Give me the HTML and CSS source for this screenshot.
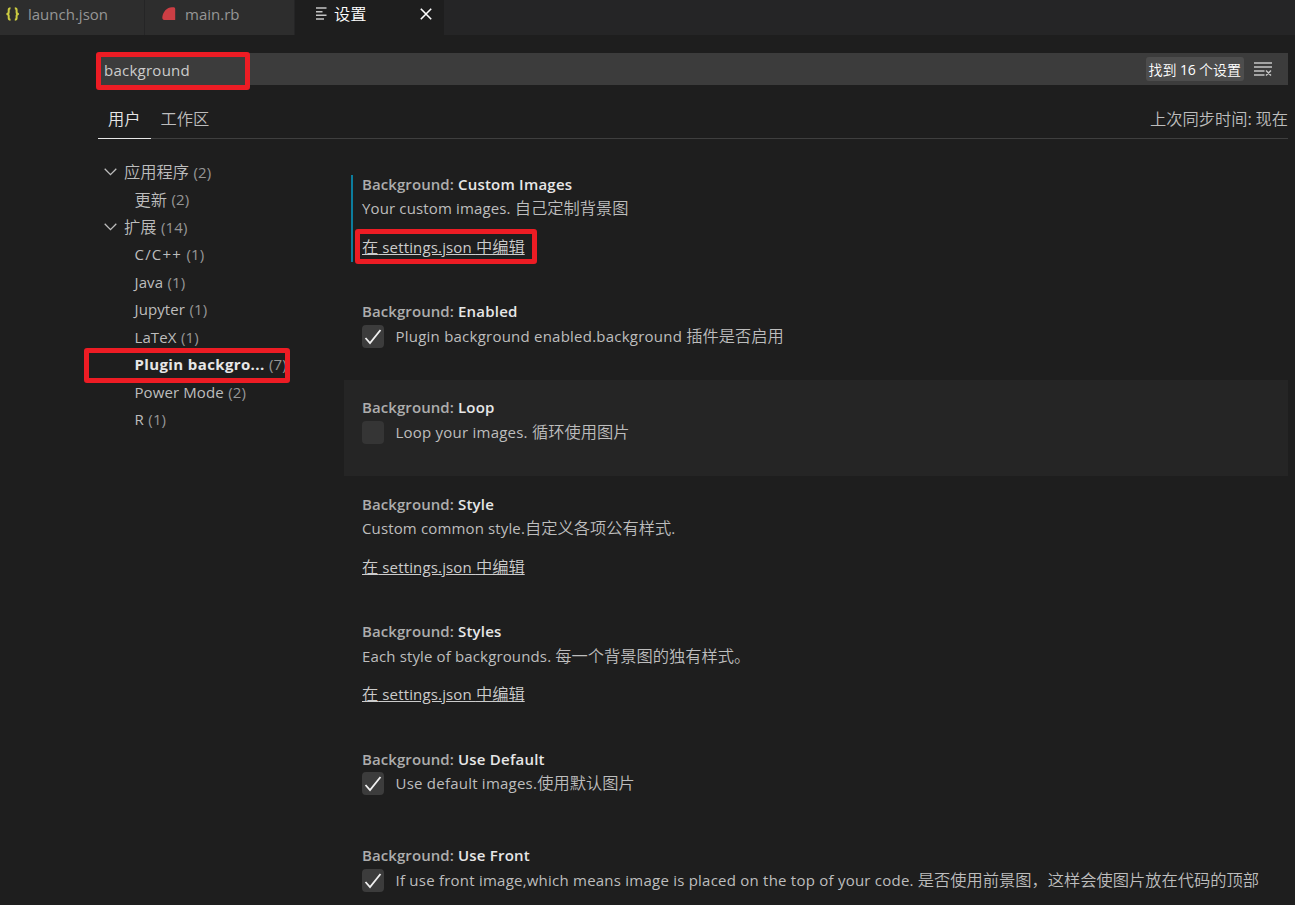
FILE: index.html
```html
<!DOCTYPE html>
<html lang="zh-CN">
<head>
  <meta charset="UTF-8">
  <title>设置</title>
  <link rel="stylesheet" href="styles.css">
</head>

<body>
  <div class="tabs">
    <div class="tab tab-json">
      <svg class="icon-json" width="14" height="14" viewBox="0 0 14 14"><path d="M4.500 1.200C3 1.200 2.700 1.800 2.700 3v2.200C2.700 6.300 2.200 6.900.5 7c1.700.1 2.200.7 2.200 1.800V11c0 1.200.3 1.800 1.800 1.800M8.800 1.200c1.500 0 1.800.6 1.800 1.800v2.200c0 1.100.5 1.700 2.200 1.800-1.700.1-2.200.7-2.200 1.800V11c0 1.200-.3 1.800-1.800 1.800"/></svg>
      <span>launch.json</span>
    </div>
    <div class="tab tab-ruby">
      <svg class="icon-ruby" width="14" height="14" viewBox="0 0 14 14"><path d="M13.200 2v11H3C.8 13.300 0 12 .4 9.500 1.200 4.500 5 .6 9.800.3c2.400-.1 3.400.2 3.400 1.700z"/></svg>
      <span>main.rb</span>
    </div>
    <div class="tab tab-settings active">
      <svg class="icon-lines" width="11" height="13" viewBox="0 0 11 13"><path d="M0 1h10.500M0 4.700h6.500M0 8.300h10.500M0 12h8"/></svg>
      <span class="zh">设置</span>
      <svg class="icon-close" width="12" height="12" viewBox="0 0 12 12"><path d="M.8.8l10.400 10.400M11.200.8L.8 11.200"/></svg>
    </div>
  </div>

  <div class="settings">
    <div class="search">
      <div class="search-text">background</div>
      <div class="count"><span class="zh">找到</span> 16 <span class="zh">个设置</span></div>
      <svg class="icon-clear" width="18" height="14" viewBox="0 0 18 14"><path d="M0 1h18M0 5h18M0 9h10.500M0 13h10.500M12 8.500l5 5M17 8.500l-5 5"/></svg>
      <div class="mark mark-search"></div>
    </div>

    <div class="scopes">
      <div class="scope selected">用户</div>
      <div class="scope">工作区</div>
      <div class="sync">上次同步时间: 现在</div>
    </div>

    <div class="columns">
      <div class="toc">
        <div class="row group"><svg class="chevron" width="13" height="8" viewBox="0 0 13 8"><path d="M.7.8l5.800 5.800L12.300.8"/></svg><span class="zh">应用程序</span><span class="num">(2)</span></div>
        <div class="row"><span class="zh">更新</span><span class="num">(2)</span></div>
        <div class="row group"><svg class="chevron" width="13" height="8" viewBox="0 0 13 8"><path d="M.7.8l5.800 5.800L12.300.8"/></svg><span class="zh">扩展</span><span class="num">(14)</span></div>
        <div class="row"><span class="cpp">C/C++</span><span class="num">(1)</span></div>
        <div class="row"><span>Java</span><span class="num">(1)</span></div>
        <div class="row"><span>Jupyter</span><span class="num">(1)</span></div>
        <div class="row"><span>LaTeX</span><span class="num">(1)</span></div>
        <div class="row current"><span class="name">Plugin backgro...</span><span class="num">(7)</span><div class="mark mark-toc"></div></div>
        <div class="row"><span>Power Mode</span><span class="num">(2)</span></div>
        <div class="row"><span>R</span><span class="num">(1)</span></div>
      </div>

      <div class="list">
        <div class="item complex modified">
          <div class="title">Background: <b>Custom Images</b></div>
          <div class="desc">Your custom images. <span class="zh">自己定制背景图</span></div>
          <a class="edit"><span class="zh">在</span> settings.json <span class="zh">中编辑</span></a>
          <div class="mark mark-edit"></div>
        </div>
        <div class="item">
          <div class="title">Background: <b>Enabled</b></div>
          <div class="check-row">
            <div class="checkbox"><svg width="18" height="18" viewBox="0 0 18 18"><path d="M1.500 10l4.500 5L16.500 2"/></svg></div>
            <div class="desc">Plugin background enabled.background <span class="zh">插件是否启用</span></div>
          </div>
        </div>
        <div class="item focused">
          <div class="title">Background: <b>Loop</b></div>
          <div class="check-row">
            <div class="checkbox"></div>
            <div class="desc">Loop your images. <span class="zh">循环使用图片</span></div>
          </div>
        </div>
        <div class="item complex">
          <div class="title">Background: <b>Style</b></div>
          <div class="desc">Custom common style.<span class="zh">自定义各项公有样式</span>.</div>
          <a class="edit"><span class="zh">在</span> settings.json <span class="zh">中编辑</span></a>
        </div>
        <div class="item complex">
          <div class="title">Background: <b>Styles</b></div>
          <div class="desc">Each style of backgrounds. <span class="zh">每一个背景图的独有样式。</span></div>
          <a class="edit"><span class="zh">在</span> settings.json <span class="zh">中编辑</span></a>
        </div>
        <div class="item">
          <div class="title">Background: <b>Use Default</b></div>
          <div class="check-row">
            <div class="checkbox"><svg width="18" height="18" viewBox="0 0 18 18"><path d="M1.500 10l4.500 5L16.500 2"/></svg></div>
            <div class="desc">Use default images.<span class="zh">使用默认图片</span></div>
          </div>
        </div>
        <div class="item">
          <div class="title">Background: <b>Use Front</b></div>
          <div class="check-row">
            <div class="checkbox"><svg width="18" height="18" viewBox="0 0 18 18"><path d="M1.500 10l4.500 5L16.500 2"/></svg></div>
            <div class="desc">If use front image,which means image is placed on the top of your code. <span class="zh">是否使用前景图，这样会使图片放在代码的顶部</span></div>
          </div>
        </div>
      </div>
    </div>
  </div>
</body>
</html>
```

FILE: styles.css
```css
:root {
  --bg: #1e1e1e;
  --tab-bg: #2d2d2d;
  --input-bg: #3c3c3c;
  --text: #bdbdbd;
  --bright: #e7e7e7;
  --mark: #ed1c24;
}

* {
  box-sizing: border-box;
}

body {
  margin: 0;
  height: 905px;
  overflow: hidden;
  background: var(--bg);
  color: var(--text);
  font-family: "Open Sans", "Noto Sans CJK SC", sans-serif;
  font-size: 15px;
  line-height: 24px;
  white-space: nowrap;
}

svg {
  display: block;
  flex: none;
  fill: none;
  stroke: currentColor;
}

.zh {
  font-family: "Noto Sans CJK SC", sans-serif;
  font-size: 16.25px;
  font-weight: 350;
  letter-spacing: 0;
  line-height: 1;
}

/* tabs */
.tabs {
  display: flex;
  height: 35px;
  background: #252526;
}

.tab {
  display: flex;
  align-items: center;
  padding-bottom: 8px;
  background: var(--tab-bg);
  border-right: 1px solid #252526;
  color: #969696;
}

.tab-json {
  width: 145px;
  padding-left: 6px;
  gap: 8px;
}

.tab-ruby {
  width: 150px;
  padding-left: 17px;
  gap: 9px;
}

.tab-settings {
  width: 149px;
  padding-left: 21px;
  gap: 7px;
}

.tab.active {
  background: var(--bg);
  color: #fff;
  border: none;
}

.icon-json {
  stroke: #cbcb41;
  stroke-width: 2;
}

.icon-ruby {
  fill: #cc3e44;
  stroke: none;
}

.icon-lines {
  color: #c5c5c5;
  stroke-width: 1.4;
}

.icon-close {
  margin-left: auto;
  margin-right: 12px;
  stroke-width: 1.6;
}

/* search */
.settings {
  padding: 18px 7px 0 98px;
}

.search {
  position: relative;
  display: flex;
  align-items: center;
  height: 32px;
  padding: 0 16px 0 6px;
  background: var(--input-bg);
  color: #ccc;
}

.search-text {
  flex: 1;
  padding-top: 2px;
  letter-spacing: 0.25px;
}

.count {
  height: 24px;
  padding: 1px 3px 0;
  margin-right: 10px;
  border-radius: 3px;
  background: #4d4d4d;
  color: #fff;
  font-size: 14px;
  letter-spacing: -0.2px;
}

.count .zh {
  font-size: 14px;
}

.icon-clear {
  color: #c5c5c5;
  stroke-width: 1.5;
}

/* user / workspace */
.scopes {
  display: flex;
  height: 54px;
  padding-top: 15px;
  border-bottom: 1px solid #3f3f3f;
  font-family: "Noto Sans CJK SC", sans-serif;
  font-size: 16.25px;
  font-weight: 350;
  line-height: 36px;
}

.scope {
  height: 39px;
  padding: 0 10px;
}

.scope.selected {
  border-bottom: 1px solid #e7e7e7;
  color: var(--bright);
}

.sync {
  margin-left: auto;
}

/* tree */
.columns {
  display: flex;
}

.toc {
  width: 246px;
  padding-top: 19px;
}

.row {
  position: relative;
  display: flex;
  align-items: center;
  gap: 4.5px;
  height: 27.5px;
  padding-left: 36.5px;
  letter-spacing: 0.1px;
}

.row.group {
  padding-left: 6px;
}

.row .zh {
  margin-top: -1px;
}

.chevron {
  margin-right: 2.5px;
  stroke-width: 1.3;
}

.cpp {
  letter-spacing: 1.2px;
}

.num {
  color: #969696;
}

.current .name {
  color: var(--bright);
  font-weight: 700;
  letter-spacing: 0.38px;
}

/* settings list */
.list {
  flex: 1;
  padding-top: 17.2px;
}

.item {
  position: relative;
  height: 96.25px;
  padding: 15.5px 18px 0;
}

.item.complex {
  height: 127.5px;
}

.item.focused {
  background: #252525;
}

.item.modified::before {
  content: "";
  position: absolute;
  left: 7px;
  top: 19px;
  width: 2px;
  height: 87px;
  background: #0c7d9d;
}

.title {
  font-weight: 600;
  color: #adadad;
  letter-spacing: 0.08px;
}

.title b {
  font-weight: 600;
  color: var(--bright);
  letter-spacing: 0.22px;
}

.desc {
  letter-spacing: 0.14px;
}

.title + .desc {
  margin-top: 0.4px;
}

.edit {
  display: block;
  margin-top: 14.6px;
  color: #ccc;
  letter-spacing: 0.15px;
  text-decoration: underline;
}

.check-row {
  display: flex;
  gap: 11.5px;
  margin-top: 0.6px;
}

.check-row .desc {
  letter-spacing: 0.23px;
}

.checkbox {
  width: 22px;
  height: 23px;
  margin-top: 1px;
  padding: 3px 2px;
  border-radius: 4px;
  background: var(--input-bg);
  color: #f0f0f0;
}

.checkbox svg {
  stroke-width: 1.8;
}

.focused .checkbox {
  background: #353535;
}

/* red frames drawn over the page */
.mark {
  position: absolute;
  border: 5px solid var(--mark);
  border-radius: 3px;
}

.mark-search {
  left: -2px;
  top: -1px;
  width: 154px;
  height: 38px;
}

.mark-toc {
  left: -14px;
  top: -3px;
  width: 206px;
  height: 35px;
}

.mark-edit {
  left: 11px;
  top: 72.8px;
  width: 182px;
  height: 35px;
}
```
